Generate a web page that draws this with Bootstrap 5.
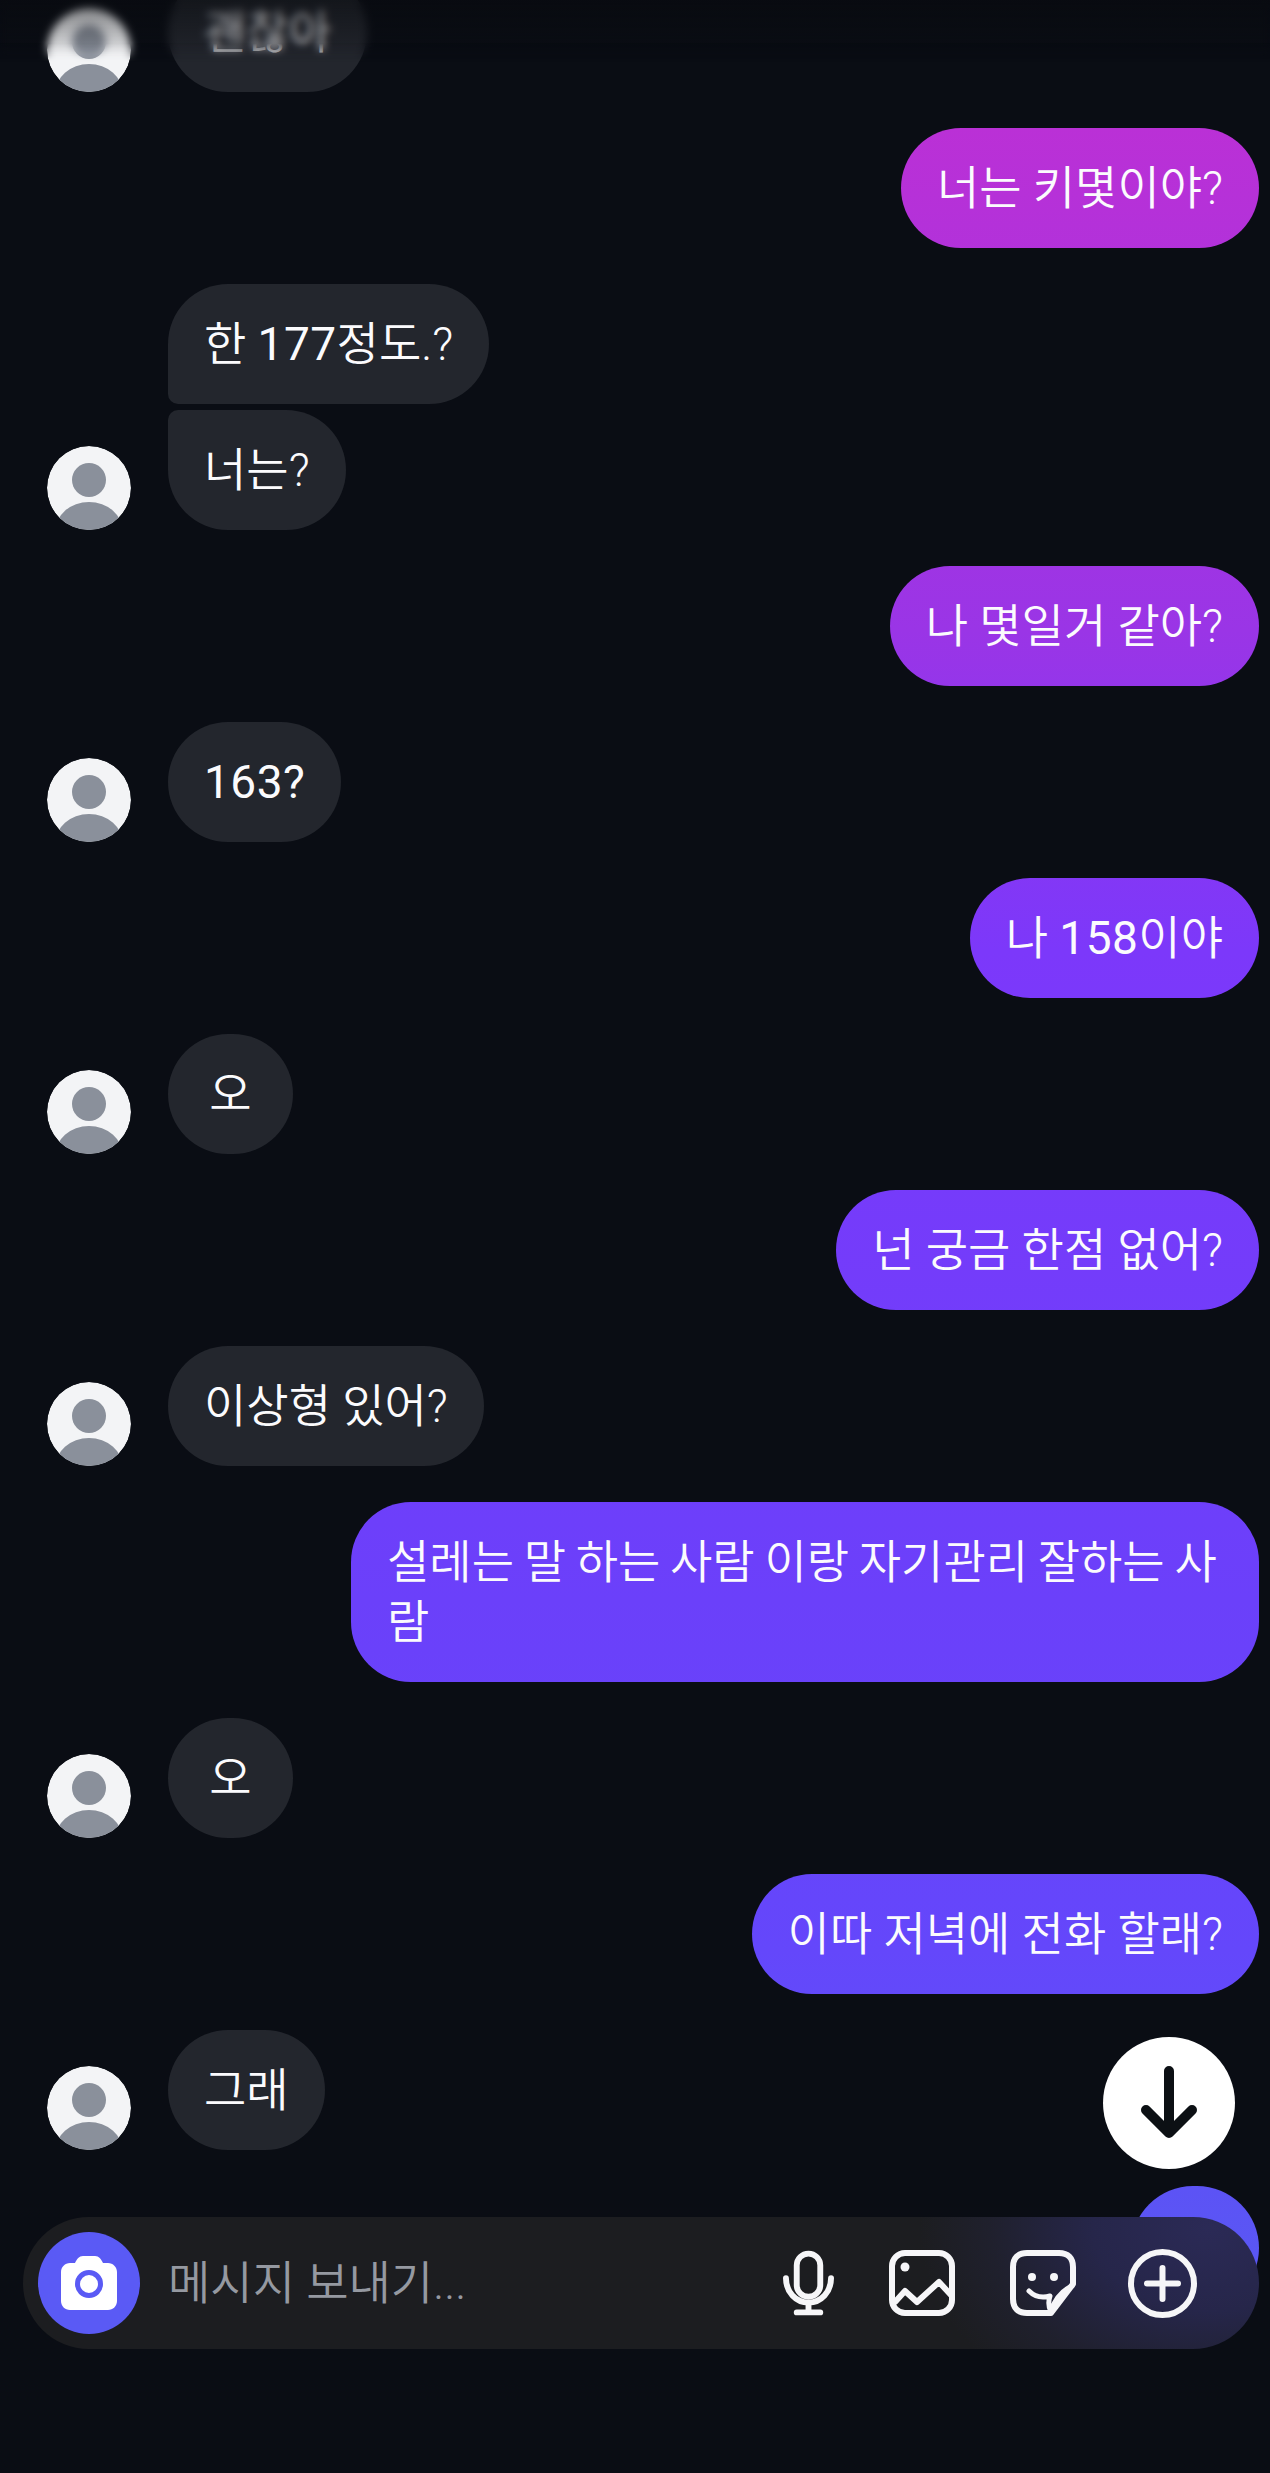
<!DOCTYPE html>
<html lang="ko">
<head>
  <meta charset="UTF-8" />
  <meta name="viewport" content="width=device-width, initial-scale=1.0"/>
  <title>메시지</title>
  <link href="https://cdn.jsdelivr.net/npm/bootstrap@5.3.0/dist/css/bootstrap.min.css" rel="stylesheet"/>
  <style>
    body {
      background-color: #0a0d14;
      font-family: Roboto, "Noto Sans CJK KR", sans-serif;
    }
    .chat-screen {
      height: 2473px;
    }
    .chat-list {
      margin-top: -28px;
      gap: 36px;
      padding-right: 11px;
      padding-left: 47px;
    }
    .msg-group {
      gap: 37px;
    }
    .avatar-pic {
      width: 84px;
      height: 84px;
      flex-shrink: 0;
    }
    .bubble {
      padding: 30px 36px;
      font-size: 46px;
      font-weight: 350;
      line-height: 60px;
      border-radius: 60px;
      width: fit-content;
      min-width: 125px;
      text-align: center;
      color: #fbfbfd;
    }
    .bubble-wrap {
      text-align: left;
      word-spacing: -1.5px;
    }
    .num-run {
      font-weight: 400;
      letter-spacing: .5px;
    }
    .bubble-in {
      background-color: #23262d;
    }
    .bubble-stack {
      gap: 6px;
    }
    .bubble-first {
      border-bottom-left-radius: 10px;
    }
    .bubble-last {
      border-top-left-radius: 10px;
    }
    .bubble-out {
      max-width: 908px;
      background: linear-gradient(180deg, #bc30d5 100px, #9a35e6 630px, #7c38fa 950px, #6b40fa 1600px, #6447fb 1950px, #5a56f4 2250px) fixed;
    }
    .bubble-hidden {
      width: 128px;
      height: 124px;
      padding: 0;
      border-radius: 62px;
    }
    .top-blur {
      height: 62px;
      backdrop-filter: blur(4px);
      background: linear-gradient(180deg, rgba(8, 10, 14, .55), rgba(8, 10, 14, 0));
      -webkit-mask-image: linear-gradient(180deg, #000 70%, transparent);
      mask-image: linear-gradient(180deg, #000 70%, transparent);
    }
    .scroll-down {
      right: 35px;
      bottom: 304px;
      width: 132px;
      height: 132px;
    }
    .input-bar {
      left: 23px;
      right: 11px;
      bottom: 124px;
      height: 132px;
      padding: 15px 62px 15px 15px;
      border-radius: 66px;
      background:
        radial-gradient(ellipse 290px 210px at calc(100% - 50px) 10px, #2b2a56 0%, #26264a 40%, rgba(38, 38, 70, .35) 75%, rgba(28, 29, 32, 0) 100%),
        #1c1d20;
    }
    .camera-btn {
      width: 102px;
      height: 102px;
      background-color: #5a5af5;
    }
    .input-hint {
      margin-left: 28px;
      font-size: 46px;
      font-weight: 350;
      color: #9599a1;
    }
    .bar-icons {
      gap: 55px;
    }
    .plus-ic {
      margin-left: -3px;
    }
  </style>
</head>
<body>

<div class="chat-screen position-relative overflow-hidden">
  <div class="chat-list d-flex flex-column">

    <div class="msg-group d-flex align-items-end">
      <svg class="avatar-pic" viewBox="0 0 84 84"><use href="#avatar"/></svg>
      <div class="bubble bubble-in">괜찮아</div>
    </div>

    <div class="d-flex justify-content-end"><div class="bubble bubble-out">너는 키몇이야?</div></div>

    <div class="msg-group d-flex align-items-end">
      <svg class="avatar-pic" viewBox="0 0 84 84"><use href="#avatar"/></svg>
      <div class="bubble-stack d-flex flex-column">
        <div class="bubble bubble-in bubble-first">한 <span class="num-run">177</span>정도.?</div>
        <div class="bubble bubble-in bubble-last">너는?</div>
      </div>
    </div>

    <div class="d-flex justify-content-end"><div class="bubble bubble-out">나 몇일거 같아?</div></div>

    <div class="msg-group d-flex align-items-end">
      <svg class="avatar-pic" viewBox="0 0 84 84"><use href="#avatar"/></svg>
      <div class="bubble bubble-in"><span class="num-run">163?</span></div>
    </div>

    <div class="d-flex justify-content-end"><div class="bubble bubble-out">나 <span class="num-run">158</span>이야</div></div>

    <div class="msg-group d-flex align-items-end">
      <svg class="avatar-pic" viewBox="0 0 84 84"><use href="#avatar"/></svg>
      <div class="bubble bubble-in">오</div>
    </div>

    <div class="d-flex justify-content-end"><div class="bubble bubble-out">넌 궁금 한점 없어?</div></div>

    <div class="msg-group d-flex align-items-end">
      <svg class="avatar-pic" viewBox="0 0 84 84"><use href="#avatar"/></svg>
      <div class="bubble bubble-in">이상형 있어?</div>
    </div>

    <div class="d-flex justify-content-end"><div class="bubble bubble-out bubble-wrap">설레는 말 하는 사람 이랑 자기관리 잘하는 사람</div></div>

    <div class="msg-group d-flex align-items-end">
      <svg class="avatar-pic" viewBox="0 0 84 84"><use href="#avatar"/></svg>
      <div class="bubble bubble-in">오</div>
    </div>

    <div class="d-flex justify-content-end"><div class="bubble bubble-out">이따 저녁에 전화 할래?</div></div>

    <div class="msg-group d-flex align-items-end">
      <svg class="avatar-pic" viewBox="0 0 84 84"><use href="#avatar"/></svg>
      <div class="bubble bubble-in">그래</div>
    </div>

    <div class="d-flex justify-content-end"><div class="bubble bubble-out bubble-hidden"></div></div>
  </div>

  <div class="top-blur position-absolute top-0 start-0 end-0"></div>

  <button type="button" class="scroll-down btn btn-light position-absolute rounded-circle border-0 p-0 bg-white d-flex align-items-center justify-content-center">
    <svg width="60" height="76" viewBox="0 0 60 76" fill="none" stroke="#0c1014" stroke-width="10" stroke-linecap="round" stroke-linejoin="round">
      <path d="M30 6V68M7 45L30 68L53 45"/>
    </svg>
  </button>

  <div class="input-bar position-absolute d-flex align-items-center">
    <div class="camera-btn rounded-circle d-flex align-items-center justify-content-center flex-shrink-0">
      <svg width="56" height="54" viewBox="0 0 56 54">
        <path fill="#fff" d="M22 0H34C38 0 40 3 42 7H47C52 7 56 11 56 16V45C56 50 52 54 47 54H9C4 54 0 50 0 45V16C0 11 4 7 9 7H14C16 3 18 0 22 0Z"/>
        <circle cx="28" cy="28" r="11.5" fill="#fff" stroke="#5a5af5" stroke-width="5"/>
      </svg>
    </div>
    <span class="input-hint">메시지 보내기...</span>

    <div class="bar-icons d-flex align-items-center ms-auto">
      <svg width="51" height="66" viewBox="0 0 52 66" fill="none" stroke="#f6f6f8" stroke-width="6" stroke-linecap="round">
        <rect x="14" y="3" width="24" height="44" rx="12"/>
        <path d="M3 28C3 42 13 53 26 53C39 53 49 42 49 28M26 53V63M14 63H38"/>
      </svg>
      <svg width="66" height="66" viewBox="0 0 66 66" fill="none" stroke="#f6f6f8" stroke-width="6" stroke-linecap="round" stroke-linejoin="round">
        <rect x="3" y="3" width="60" height="60" rx="13"/>
        <circle cx="16" cy="17" r="4.5" fill="#f6f6f8" stroke="none"/>
        <path d="M6 52L16 41L28 52L50 32L62 45"/>
      </svg>
      <svg width="66" height="66" viewBox="0 0 66 66" fill="none" stroke="#f6f6f8" stroke-width="6" stroke-linecap="round" stroke-linejoin="round">
        <path d="M17 3H49C58 3 63 8 63 17V34L41 63H17C8 63 3 58 3 49V17C3 8 8 3 17 3Z"/>
        <circle cx="22" cy="27" r="4" fill="#f6f6f8" stroke="none"/>
        <circle cx="44" cy="27" r="4" fill="#f6f6f8" stroke="none"/>
        <path d="M19 41C25 47 33 48 40 46C38 52 39 58 41 62M41 61C45 49 51 41 62 36" stroke-width="5"/>
      </svg>
      <svg class="plus-ic" width="69" height="69" viewBox="0 0 69 69" fill="none" stroke="#f6f6f8" stroke-width="6" stroke-linecap="round">
        <circle cx="34.5" cy="34.5" r="31.5"/>
        <path d="M34.5 19V50M19 34.5H50"/>
      </svg>
    </div>
  </div>
</div>

<svg width="0" height="0" class="position-absolute">
  <defs>
    <clipPath id="avatarClip"><circle cx="42" cy="42" r="42"/></clipPath>
    <g id="avatar" clip-path="url(#avatarClip)">
      <circle cx="42" cy="42" r="42" fill="#f3f4f6"/>
      <circle cx="42" cy="34" r="17" fill="#8a909b"/>
      <ellipse cx="42" cy="86" rx="34" ry="30" fill="#8a909b"/>
    </g>
  </defs>
</svg>

<script src="https://cdn.jsdelivr.net/npm/bootstrap@5.3.0/dist/js/bootstrap.bundle.min.js"></script>
</body>
</html>
